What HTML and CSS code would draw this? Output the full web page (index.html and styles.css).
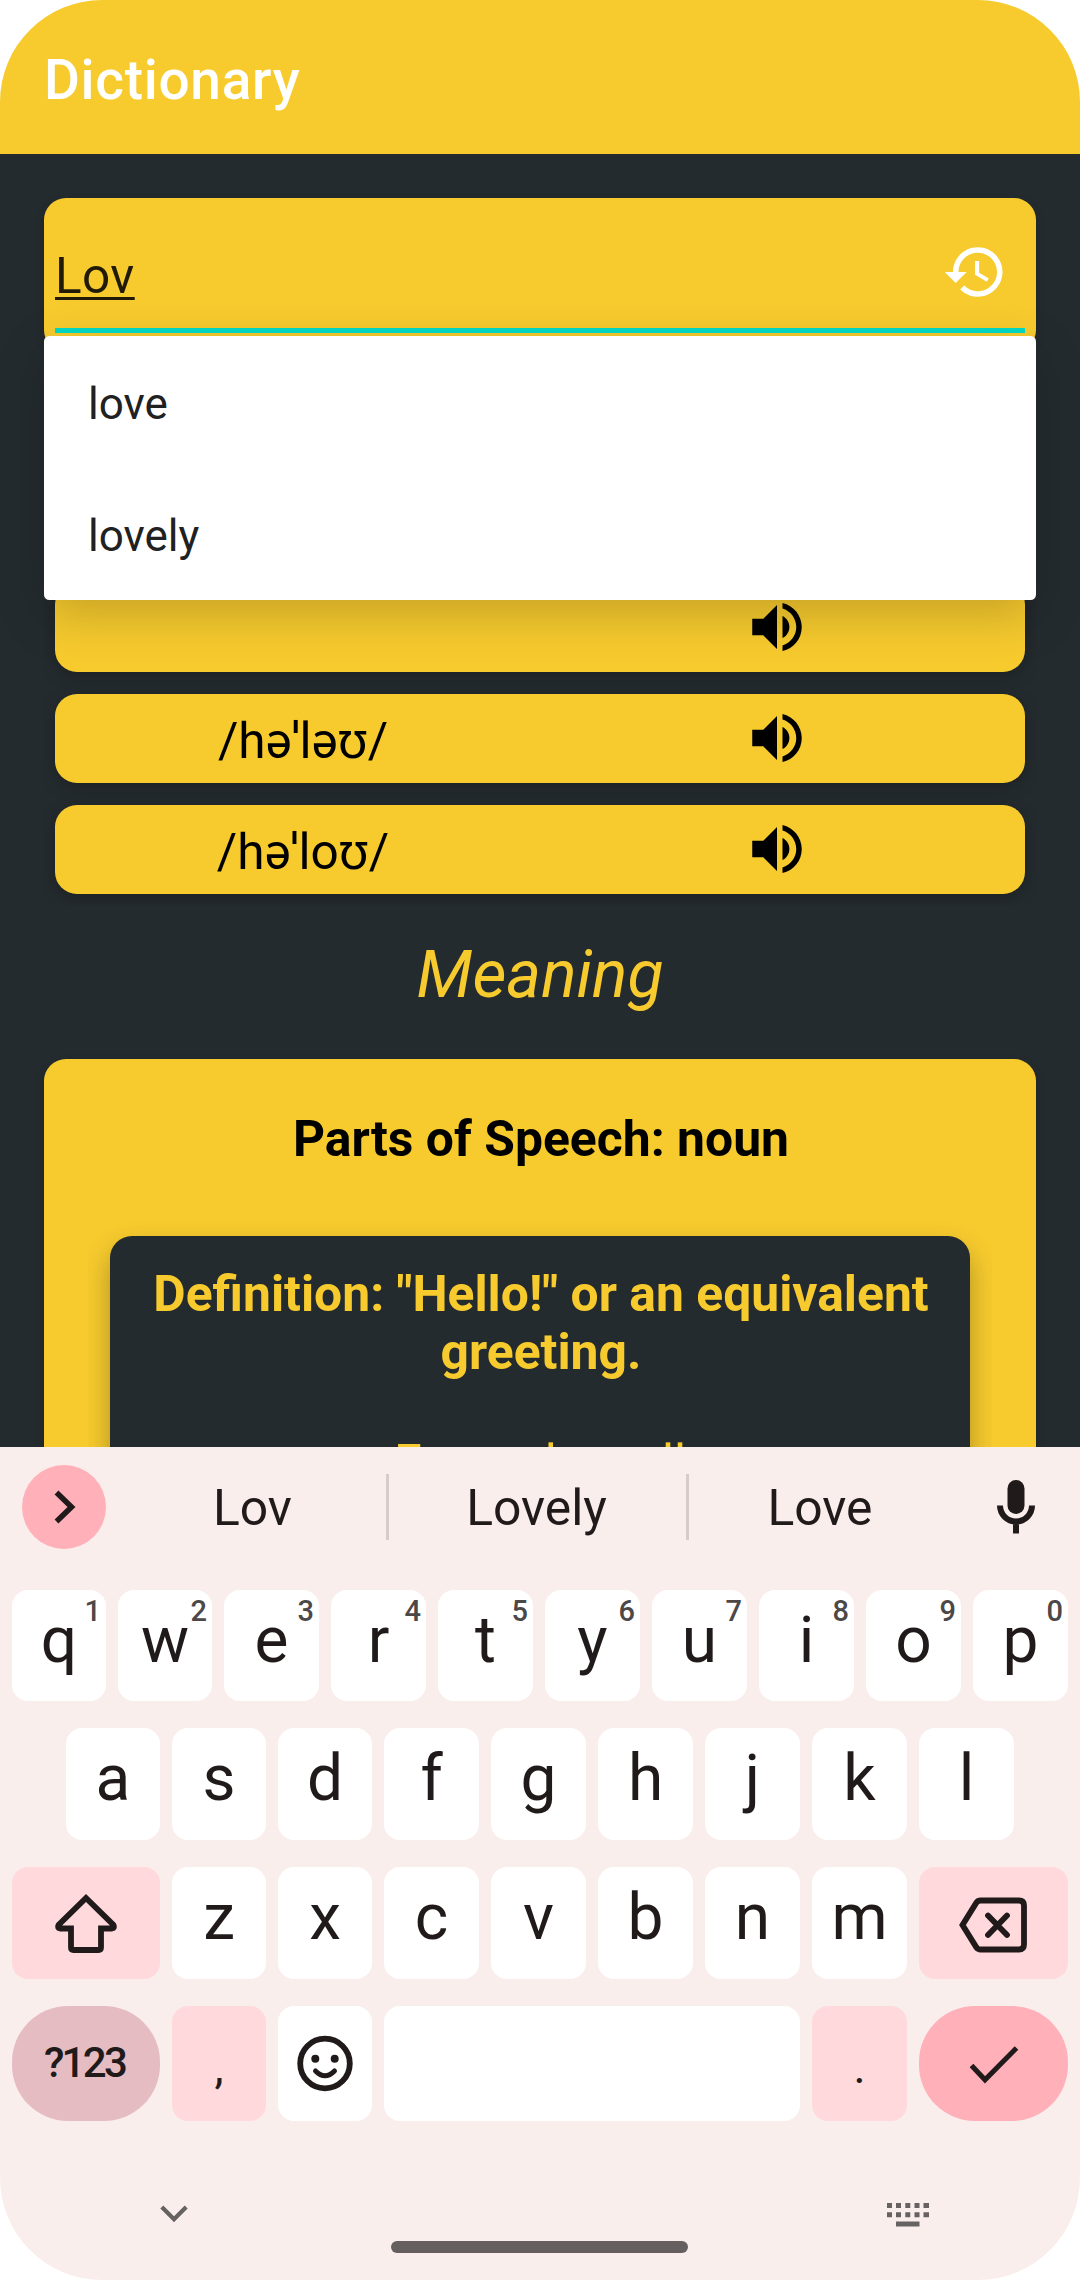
FILE: index.html
```html
<!DOCTYPE html>
<html lang="en">
<head>
<meta charset="utf-8">
<title>Dictionary</title>
<link rel="stylesheet" href="styles.css">
</head>
<body>
<svg class="defs" aria-hidden="true">
  <symbol id="volume" viewBox="0 0 24 24">
    <path d="M3 9v6h4l5 5V4L7 9H3z"/>
    <path d="M16.5 12c0-1.77-1.02-3.29-2.5-4.03v8.05c1.48-.73 2.5-2.25 2.5-4.02z"/>
    <path d="M14 3.23v2.06c2.89.86 5 3.54 5 6.71s-2.11 5.85-5 6.71v2.06c4.01-.91 7-4.49 7-8.77s-2.99-7.86-7-8.77z"/>
  </symbol>
</svg>
<div class="phone">
  <header class="app-bar"><h1>Dictionary</h1></header>

  <main class="content">
    <section class="search">
      <div class="search-field">
        <span class="query">Lov</span>
        <svg class="history" viewBox="0 0 24 24"><path d="M13 3c-4.97 0-9 4.03-9 9H1l3.89 3.89.07.14L9 12H6c0-3.87 3.13-7 7-7s7 3.13 7 7-3.13 7-7 7c-1.93 0-3.68-.79-4.94-2.06l-1.42 1.42C8.27 19.99 10.51 21 13 21c4.97 0 9-4.03 9-9s-4.03-9-9-9zm-1 5v5l4.28 2.54.72-1.21-3.5-2.08V8H12z"/></svg>
      </div>
      <ul class="suggestions">
        <li>love</li>
        <li>lovely</li>
      </ul>
    </section>

    <section class="phonetics">
      <div class="phonetic"><span class="ipa"></span><span class="play"><svg><use href="#volume"/></svg></span></div>
      <div class="phonetic"><span class="ipa">/həˈləʊ/</span><span class="play"><svg><use href="#volume"/></svg></span></div>
      <div class="phonetic"><span class="ipa">/həˈloʊ/</span><span class="play"><svg><use href="#volume"/></svg></span></div>
    </section>

    <h2 class="section-title">Meaning</h2>

    <section class="meaning">
      <h3>Parts of Speech: noun</h3>
      <div class="definitions">
        <article class="definition">
          <p class="definition-text">Definition: "Hello!" or an equivalent greeting.</p>
          <p class="example">Example: null</p>
        </article>
      </div>
    </section>
  </main>

  <section class="keyboard">
    <div class="strip">
      <span class="expand"><svg width="84" height="84" viewBox="0 0 84 84"><path d="M34.500 27.500L49.500 42 34.500 56.500"/></svg></span>
      <div class="words">
        <span class="word">Lov</span>
        <span class="word">Lovely</span>
        <span class="word">Love</span>
      </div>
      <svg class="mic" width="40" height="54" viewBox="0 0 40 54"><rect x="11.500" y="0" width="17" height="34" rx="8.500"/><path d="M4 25.500a16 16 0 0 0 32 0M20 42v11.500"/></svg>
    </div>

    <div class="keys">
      <div class="row row-top">
        <span class="key narrow">q<sup>1</sup></span><span class="key narrow">w<sup>2</sup></span><span class="key">e<sup>3</sup></span><span class="key">r<sup>4</sup></span><span class="key">t<sup>5</sup></span><span class="key">y<sup>6</sup></span><span class="key">u<sup>7</sup></span><span class="key">i<sup>8</sup></span><span class="key">o<sup>9</sup></span><span class="key">p<sup>0</sup></span>
      </div>
      <div class="row row-home">
        <span class="key narrow">a</span><span class="key narrow">s</span><span class="key narrow">d</span><span class="key">f</span><span class="key">g</span><span class="key">h</span><span class="key">j</span><span class="key">k</span><span class="key">l</span>
      </div>
      <div class="row row-shift">
        <span class="key soft icon shift"><svg width="66" height="66" viewBox="0 0 66 66"><path d="M33 8L5.500 35q-1.500 3 1.500 3.500h11v19q0 2.500 2.500 2.500h25q2.500 0 2.500-2.500v-19h11q3-.5 1.500-3.500z"/></svg></span>
        <span class="key narrow">z</span><span class="key narrow">x</span><span class="key">c</span><span class="key">v</span><span class="key">b</span><span class="key">n</span><span class="key">m</span>
        <span class="key soft icon delete"><svg width="74" height="60" viewBox="0 0 74 60"><path d="M5.500 32L19.500 9.500q1.500-2 4-2H62q5 0 5 5v39q0 5-5 5H23.500q-2.500 0-4-2zM31 22.500l19 19.500M50 22.500l-19 19.500"/></svg></span>
      </div>
      <div class="row row-bottom">
        <span class="key mode">?123</span>
        <span class="key narrow soft punct">,</span>
        <span class="key narrow icon"><svg width="60" height="60" viewBox="0 0 60 60"><circle cx="30" cy="29.500" r="24.800"/><circle class="dot" cx="20.300" cy="24.700" r="4"/><circle class="dot" cx="39.700" cy="24.700" r="4"/><path class="smile" d="M20.500 37q9.500 9.600 19 0"/></svg></span>
        <span class="key space"></span>
        <span class="key soft punct">.</span>
        <span class="key enter icon"><svg width="60" height="60" viewBox="0 0 60 60"><path d="M7.500 31.500l13.500 14.300L52.500 14"/></svg></span>
      </div>
    </div>

    <div class="nav">
      <svg width="30" height="20" viewBox="0 0 30 20"><path class="collapse" d="M2.800 3L15 15.200 27.200 3"/></svg>
      <svg width="42" height="24" viewBox="0 0 42 24"><path d="M0 0h5v5H0zM9 0h5v5H9zM18.300 0h5v5h-5zM27.500 0h5v5h-5zM36.500 0h5.500v5h-5.500zM0 9.300h5v5H0zM9 9.300h5v5H9zM18.300 9.300h5v5h-5zM27.500 9.300h5v5h-5zM36.500 9.300h5.500v5h-5.500zM9 18.500h23.500v5H9z"/></svg>
    </div>
    <div class="home-bar"></div>
  </section>
</div>
</body>
</html>
```
FILE: styles.css
```css
* { box-sizing: border-box; }

body {
  margin: 0;
  background: #fff;
  font-family: Roboto, "Noto Sans", sans-serif;
}

h1, h2, h3, p, ul { margin: 0; padding: 0; font-weight: 400; }
svg { display: block; }
.defs { width: 0; height: 0; position: absolute; }

.phone {
  display: flex;
  flex-direction: column;
  width: 1080px;
  height: 2280px;
  border-radius: 102px;
  overflow: hidden;
}

/* App bar */
.app-bar {
  display: flex;
  align-items: center;
  height: 154px;
  padding: 6px 44px 0;
  background: #f7cb2e;
  flex: none;
}
.app-bar h1 {
  color: #fff;
  font-size: 55px;
  font-weight: 500;
  line-height: 64px;
  letter-spacing: .7px;
}

/* Dictionary page */
.content {
  height: 1293px;
  flex: none;
  padding: 44px 44px 0;
  overflow: hidden;
  background: #242b2e;
}

.search { position: relative; height: 154px; }
.search-field {
  display: flex;
  justify-content: space-between;
  height: 154px;
  padding: 0 11px;
  border-radius: 22px;
  background: #f7cb2e;
  box-shadow: 0 4px 10px rgba(0, 0, 0, .2);
}
.search-field::after {
  content: "";
  position: absolute;
  left: 11px;
  right: 11px;
  top: 130px;
  height: 5px;
  background: #03dac5;
}
.query {
  margin-top: 49px;
  height: 58px;
  line-height: 58px;
  font-size: 49.5px;
  letter-spacing: .4px;
  color: rgba(0, 0, 0, .87);
  text-decoration: underline;
  text-decoration-thickness: 2.500px;
  text-underline-offset: 4px;
}
.history { width: 66px; height: 66px; margin: 41px 17px 0 0; fill: #fff; }

.suggestions {
  position: absolute;
  z-index: 2;
  top: 138px;
  left: 0;
  right: 0;
  list-style: none;
  border-radius: 5.5px;
  background: #fff;
  box-shadow: 0 16px 50px rgba(0, 0, 0, .2);
}
.suggestions li {
  height: 132px;
  padding: 4px 44px 0;
  font-size: 44px;
  line-height: 128px;
  color: #212121;
}

.phonetics {
  display: flex;
  flex-direction: column;
  gap: 22px;
  margin-top: 220px;
  padding: 11px;
  overflow: hidden;
}
.phonetic {
  display: flex;
  height: 89px;
  padding: 0 11px;
  border-radius: 22px;
  background: #f7cb2e;
  box-shadow: 0 4px 16px rgba(0, 0, 0, .25);
}
.ipa, .play { flex: 1; display: flex; justify-content: center; align-items: center; }
.ipa { height: 58px; margin-top: 18px; line-height: 58px; font-size: 49.5px; color: #000; }
.play { padding-bottom: 2px; }
.play svg { width: 66px; height: 66px; fill: #000; }

.section-title {
  margin-top: 31px;
  height: 78px;
  line-height: 78px;
  font-size: 66px;
  font-style: italic;
  text-align: center;
  color: #f7cb2e;
}

.meaning {
  margin-top: 45px;
  padding: 51px 44px 0;
  border-radius: 22px;
  background: #f7cb2e;
  box-shadow: 0 4px 10px rgba(0, 0, 0, .2);
}
.meaning h3 {
  padding-left: 2px;
  line-height: 58px;
  font-size: 49.85px;
  font-weight: 700;
  text-align: center;
  color: #000;
}
.definitions { margin-top: 46px; padding: 22px 22px 0; overflow: hidden; }
.definition {
  height: 400px;
  padding: 29px 22px 0;
  border-radius: 22px;
  background: #242b2e;
  color: #f7cb2e;
  font-size: 49.5px;
  line-height: 58px;
  text-align: center;
  box-shadow: 0 14px 28px rgba(0, 0, 0, .3);
}
.definition-text { padding-left: 2px; font-size: 49.8px; font-weight: 700; }
.example { margin-top: 53px; }

/* Keyboard */
.keyboard {
  height: 833px;
  flex: none;
  background: #faeeed;
  color: #201a1a;
}

.strip {
  display: flex;
  align-items: flex-start;
  height: 143px;
  padding: 18px 44px 0 22px;
}
.expand { width: 84px; height: 84px; border-radius: 50%; background: #ffb0b9; }
.expand path { fill: none; stroke: #201a1a; stroke-width: 5.500; }
.words {
  display: grid;
  grid-template-columns: 268px 300px 268px;
  width: 836px;
  margin: 9px 0 0 15px;
}
.word {
  height: 66px;
  padding-right: 2px;
  line-height: 68px;
  font-size: 49.8px;
  text-align: center;
}
.word:not(:last-child) { border-right: 3px solid #d7cbcb; }
.word:last-child { padding-right: 6px; }
.mic { margin: 15px 0 0 39px; flex: none; fill: #201a1a; }
.mic path { fill: none; stroke: #201a1a; stroke-width: 6; }

.keys { display: flex; flex-direction: column; gap: 27px; padding: 0 12px; }
.row { display: flex; gap: 12px; height: 112px; }
.row-top { height: 111px; }
.row-home { padding: 0 54px; }
.row-bottom { height: 115px; }
.key {
  position: relative;
  flex: none;
  width: 95px;
  padding-bottom: 10px;
  display: flex;
  align-items: center;
  justify-content: center;
  border-radius: 16px;
  background: #fff;
  font-size: 64px;
  line-height: 78px;
}
.narrow { width: 94px; }
.key sup {
  position: absolute;
  top: 4px;
  right: 5px;
  font-size: 29px;
  font-weight: 500;
  line-height: 34px;
  color: #4d4848;
}
.soft { background: #ffd9dc; }
.icon { padding-bottom: 0; }
.icon svg { fill: none; stroke: #201a1a; stroke-width: 5.800; stroke-linejoin: round; }
.shift, .mode { width: 148px; }
.delete, .enter { width: 149px; }
.row-shift .icon path { stroke-linecap: round; stroke-linejoin: miter; }
.icon .dot { fill: #201a1a; stroke: none; }
.icon .smile { stroke-width: 5; stroke-linecap: round; }
.mode, .enter { border-radius: 56px; }
.mode {
  padding: 0 3px 2px 0;
  background: #e5bcc1;
  font-size: 42px;
  font-weight: 500;
  line-height: 50px;
  letter-spacing: -2.700px;
}
.enter { background: #ffb0b9; }
.enter svg { stroke-width: 5; stroke-linejoin: miter; }
.space { width: 416px; }
.punct { padding: 7px 0 0; font-size: 46px; line-height: 60px; }

.nav {
  display: flex;
  justify-content: space-between;
  height: 41px;
  margin-top: 82px;
  padding: 0 151px 0 158.5px;
  fill: #666262;
}
.nav .collapse { fill: none; stroke: #666262; stroke-width: 4.200; }
.nav svg:first-child { margin-top: 1px; }
.home-bar {
  width: 297px;
  height: 12px;
  margin: -3px 0 0 391px;
  border-radius: 6px;
  background: #655f60;
}
```
